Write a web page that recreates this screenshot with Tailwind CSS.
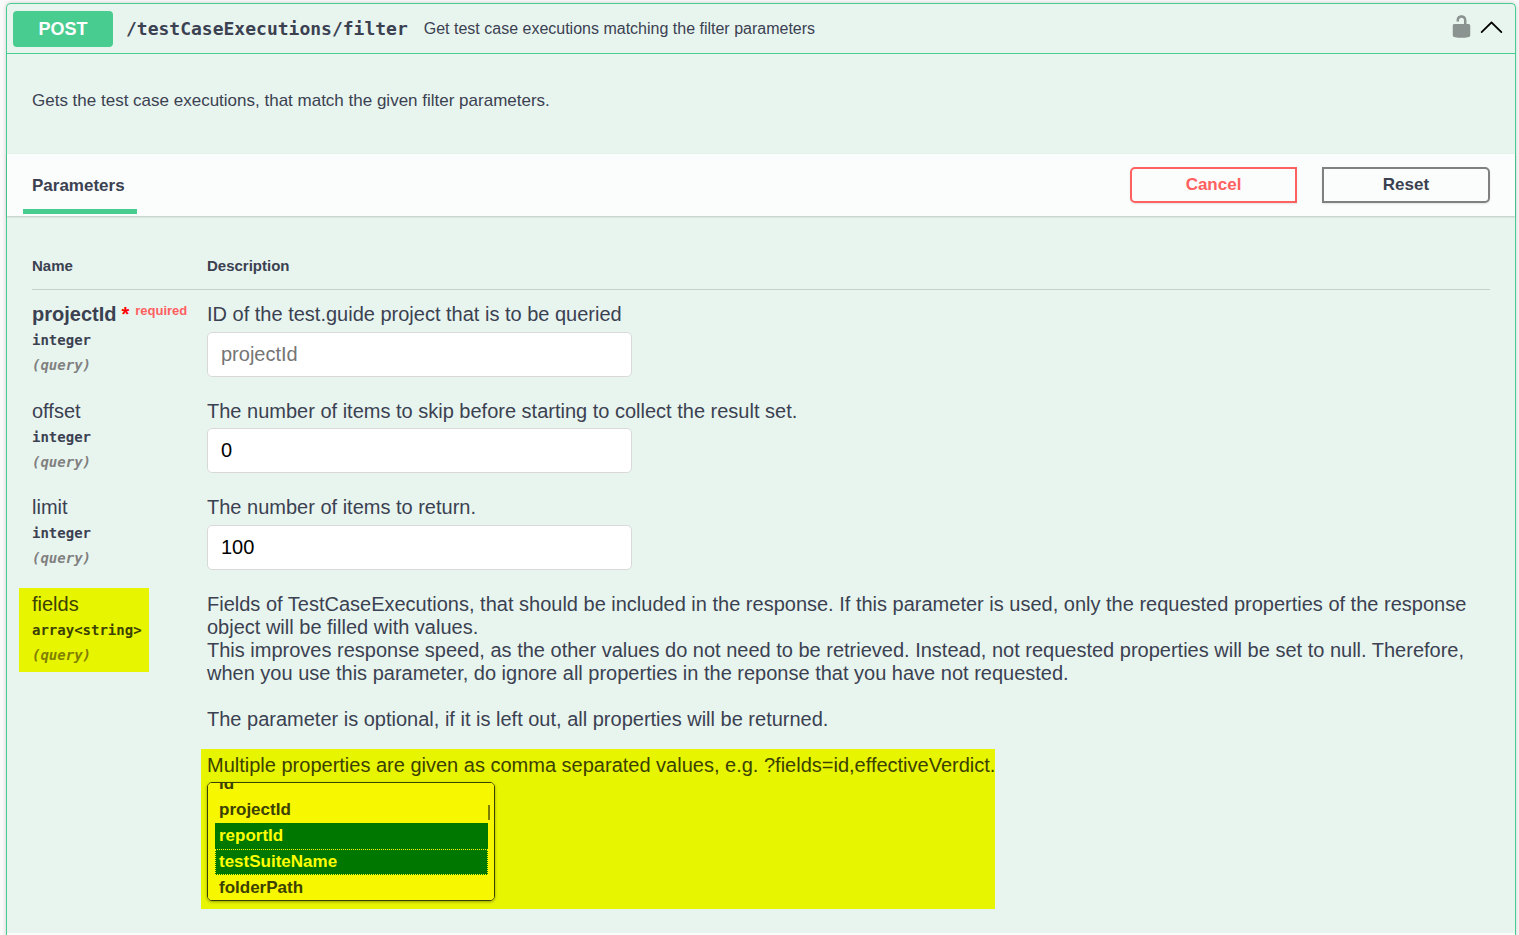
<!DOCTYPE html>
<html lang="en">

<head>
    <meta charset="UTF-8">
    <meta name="viewport" content="width=device-width, initial-scale=1.0">
    <title>test.guide API</title>
    <script src="https://cdn.jsdelivr.net/npm/@tailwindcss/browser@4"></script>
</head>

<body class="bg-[#fafafa] font-['Liberation_Sans',Arial,sans-serif] text-[#3b4151]">
    <div class="h-screen overflow-hidden pt-[3px] pl-[6px] pr-[3px]">
        <div class="rounded-t-[5px] border border-b-0 border-[#49cc90] bg-[#e8f5ef] shadow-[0_0_4px_rgba(0,0,0,0.19)]">

            <!-- summary -->
            <div class="flex items-center h-[50px] pl-[6px] pr-[11px] border-b border-[#49cc90]">
                <span class="w-[100px] h-9 leading-9 rounded-[4px] bg-[#49cc90] text-center text-lg font-bold text-white">POST</span>
                <a href="#filter" class="ml-[13px] font-['DejaVu_Sans_Mono',monospace] text-[18px] font-bold">/testCaseExecutions/filter</a>
                <span class="ml-4 text-base">Get test case executions matching the filter parameters</span>
                <button type="button" aria-label="authorization button unlocked" class="ml-auto mb-1">
                    <svg class="block size-[25px]" viewBox="0 0 20 20" fill="#8b9390">
                        <path d="M15.8 8H14V5.6C14 2.703 12.665 1 10 1 7.334 1 6 2.703 6 5.6V6h2v-.801C8 3.754 8.797 3 10 3c1.203 0 2 .754 2 2.199V8H4c-.553 0-1 .646-1 1.199V17c0 .549.428 1.139.951 1.307l1.197.387C5.672 18.861 6.55 19 7.1 19h5.8c.549 0 1.428-.139 1.951-.307l1.196-.387c.524-.167.953-.757.953-1.306V9.199C17 8.646 16.352 8 15.8 8z" />
                    </svg>
                </button>
                <button type="button" aria-label="collapse operation" class="ml-[5px] mb-1">
                    <svg class="block size-[25px]" viewBox="0 0 20 20" fill="#000">
                        <path d="M17.418 14.908C17.69 15.176 18.127 15.176 18.397 14.908C18.667 14.64 18.668 14.207 18.397 13.939L10.489 6.109C10.219 5.841 9.782 5.841 9.51 6.109L1.602 13.939C1.332 14.207 1.332 14.64 1.602 14.908C1.873 15.176 2.311 15.176 2.581 14.908L10 7.767L17.418 14.908Z" />
                    </svg>
                </button>
            </div>

            <p class="px-[25px] pt-9 pb-[43px] text-[17px] leading-[21px]">Gets the test case executions, that match the given filter parameters.</p>

            <!-- parameters bar -->
            <div class="flex items-center justify-between h-[62px] pl-4 pr-[25px] bg-white/80 shadow-[0_1px_2px_rgba(0,0,0,0.2)]">
                <h4 class="h-[57px] pt-[5px] pl-[9px] pr-3 border-b-5 border-[#49cc90] text-[17px] leading-[47px] font-bold">Parameters</h4>
                <div class="flex gap-[25px]">
                    <button type="button" class="w-[167px] h-9 rounded-l-[5px] border-2 border-[#ff6060] text-[17px] font-bold text-[#ff6060] shadow-[0_1px_2px_rgba(0,0,0,0.1)]">Cancel</button>
                    <button type="button" class="w-[168px] h-9 rounded-r-[5px] border-2 border-[#808080] text-[17px] font-bold shadow-[0_1px_2px_rgba(0,0,0,0.1)]">Reset</button>
                </div>
            </div>

            <div class="px-[25px] pt-[35px] pb-6">
                <table class="w-full table-fixed text-left">
                    <thead>
                        <tr class="border-b border-[#3b4151]/20 text-[15px] leading-[30px]">
                            <th class="w-[175px] pb-2 font-bold">Name</th>
                            <th class="pb-2 font-bold">Description</th>
                        </tr>
                    </thead>
                    <tbody class="align-top text-[20px] leading-[23px]">
                        <tr>
                            <td class="pt-[13px]">
                                <label for="projectId" class="block font-bold">projectId<span class="pl-[5px] text-[red]">*</span><span class="relative -top-[6px] pl-[6px] text-[13px] leading-none text-[#ff6060]">required</span></label>
                                <div class="pt-[5px] font-['DejaVu_Sans_Mono',monospace] text-[14px] leading-[18px] font-bold">integer</div>
                                <div class="pt-[7px] font-['DejaVu_Sans_Mono',monospace] text-[14px] leading-[18px] font-bold italic text-[#808080]">(query)</div>
                            </td>
                            <td class="pt-[13px]">
                                <p>ID of the test.guide project that is to be queried</p>
                                <input id="projectId" type="text" placeholder="projectId" class="block w-[425px] h-[45px] mt-[6px] px-[13px] rounded-[5px] border border-[#d9d9d9] bg-white text-black placeholder:text-[#757575]">
                            </td>
                        </tr>
                        <tr>
                            <td class="pt-[23px]">
                                <label for="offset" class="block">offset</label>
                                <div class="pt-[5px] font-['DejaVu_Sans_Mono',monospace] text-[14px] leading-[18px] font-bold">integer</div>
                                <div class="pt-[7px] font-['DejaVu_Sans_Mono',monospace] text-[14px] leading-[18px] font-bold italic text-[#808080]">(query)</div>
                            </td>
                            <td class="pt-[23px]">
                                <p>The number of items to skip before starting to collect the result set.</p>
                                <input id="offset" type="text" value="0" class="block w-[425px] h-[45px] mt-[5px] px-[13px] rounded-[5px] border border-[#d9d9d9] bg-white text-black">
                            </td>
                        </tr>
                        <tr>
                            <td class="pt-[23px]">
                                <label for="limit" class="block">limit</label>
                                <div class="pt-[5px] font-['DejaVu_Sans_Mono',monospace] text-[14px] leading-[18px] font-bold">integer</div>
                                <div class="pt-[7px] font-['DejaVu_Sans_Mono',monospace] text-[14px] leading-[18px] font-bold italic text-[#808080]">(query)</div>
                            </td>
                            <td class="pt-[23px]">
                                <p>The number of items to return.</p>
                                <input id="limit" type="text" value="100" class="block w-[425px] h-[45px] mt-[6px] px-[13px] rounded-[5px] border border-[#d9d9d9] bg-white text-black">
                            </td>
                        </tr>
                        <tr>
                            <td class="pt-[18px]">
                                <div class="w-[130px] h-[84px] -ml-[13px] pl-[13px] pt-[5px] bg-[#e8f500] text-[#3b4100]">
                                    <label for="fields" class="block">fields</label>
                                    <div class="pt-[5px] font-['DejaVu_Sans_Mono',monospace] text-[14px] leading-[18px] font-bold">array&lt;string&gt;</div>
                                    <div class="pt-[7px] font-['DejaVu_Sans_Mono',monospace] text-[14px] leading-[18px] font-bold italic text-[#808000]">(query)</div>
                                </div>
                            </td>
                            <td class="pt-[23px]">
                                <p>Fields of TestCaseExecutions, that should be included in the response. If this parameter is used, only the requested properties of the response object will be filled with values.<br>This improves response speed, as the other values do not need to be retrieved. Instead, not requested properties will be set to null. Therefore, when you use this parameter, do ignore all properties in the reponse that you have not requested.</p>
                                <p class="pt-[23px]">The parameter is optional, if it is left out, all properties will be returned.</p>
                                <div class="w-fit mt-[18px] -ml-[6px] pl-[6px] pt-[5px] pb-2 bg-[#e8f500] text-[#3b4100]">
                                    <p>Multiple properties are given as comma separated values, e.g. ?fields=id,effectiveVerdict.</p>
                                    <div class="relative w-72 mt-[5px]">
                                        <select id="fields" multiple class="block w-full h-[119px] pl-[7px] pr-[6px] rounded-[5px] border border-[#3b4100] bg-[#f7f700] text-[17px] shadow-[0_1px_3px_rgba(0,0,0,0.35)] [scrollbar-width:none]">
                                            <option class="h-[26px] px-1 pt-[3px] pb-0 font-bold">id</option>
                                            <option class="h-[26px] px-1 pt-[3px] pb-0 font-bold">projectId</option>
                                            <option selected class="h-[26px] px-1 pt-[3px] pb-0 font-bold text-[#ff0] bg-linear-to-r from-[#007800] to-[#007800]">reportId</option>
                                            <option selected class="h-[26px] px-1 pt-[3px] pb-0 font-bold text-[#ff0] bg-linear-to-r from-[#007800] to-[#007800] outline outline-dotted -outline-offset-1 outline-[#ff0]">testSuiteName</option>
                                            <option class="h-[26px] px-1 pt-[3px] pb-0 font-bold">folderPath</option>
                                            <option class="h-[26px] px-1 pt-[3px] pb-0 font-bold">effectiveVerdict</option>
                                        </select>
                                        <span class="absolute right-[5px] top-[23px] w-[2px] h-[15px] bg-[#808000]"></span>
                                    </div>
                                </div>
                            </td>
                        </tr>
                    </tbody>
                </table>
            </div>

            <!-- next section bar -->
            <div class="h-[62px] bg-white/80"></div>
        </div>
    </div>
</body>
<script>
    document.getElementById('fields').scrollTop = 12;
</script>

</html>
